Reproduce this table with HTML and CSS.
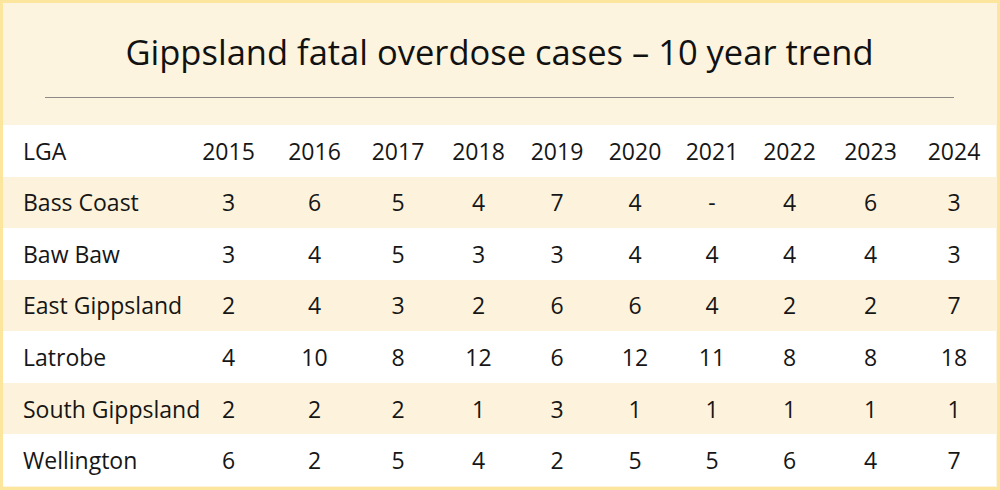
FILE: index.html
```html
<!DOCTYPE html>
<html lang="en">
<head>
<meta charset="utf-8">
<title>Gippsland fatal overdose cases – 10 year trend</title>
<link rel="stylesheet" href="styles.css">
</head>
<body>
<div class="card">
  <h1 class="title">Gippsland fatal overdose cases – 10 year trend</h1>
  <hr class="rule">
  <table class="data">
    <colgroup>
      <col class="c-lga">
      <col class="c15"><col class="c16"><col class="c17"><col class="c18"><col class="c19">
      <col class="c20"><col class="c21"><col class="c22"><col class="c23"><col class="c24">
    </colgroup>
    <thead>
      <tr class="row-white">
        <th class="lga">LGA</th>
        <th>2015</th><th>2016</th><th>2017</th><th>2018</th><th>2019</th>
        <th>2020</th><th>2021</th><th>2022</th><th>2023</th><th>2024</th>
      </tr>
    </thead>
    <tbody>
      <tr class="row-cream">
        <td class="lga">Bass Coast</td>
        <td>3</td><td>6</td><td>5</td><td>4</td><td>7</td><td>4</td><td>-</td><td>4</td><td>6</td><td>3</td>
      </tr>
      <tr class="row-white">
        <td class="lga">Baw Baw</td>
        <td>3</td><td>4</td><td>5</td><td>3</td><td>3</td><td>4</td><td>4</td><td>4</td><td>4</td><td>3</td>
      </tr>
      <tr class="row-cream">
        <td class="lga">East Gippsland</td>
        <td>2</td><td>4</td><td>3</td><td>2</td><td>6</td><td>6</td><td>4</td><td>2</td><td>2</td><td>7</td>
      </tr>
      <tr class="row-white">
        <td class="lga">Latrobe</td>
        <td>4</td><td>10</td><td>8</td><td>12</td><td>6</td><td>12</td><td>11</td><td>8</td><td>8</td><td>18</td>
      </tr>
      <tr class="row-cream">
        <td class="lga">South Gippsland</td>
        <td>2</td><td>2</td><td>2</td><td>1</td><td>3</td><td>1</td><td>1</td><td>1</td><td>1</td><td>1</td>
      </tr>
      <tr class="row-white">
        <td class="lga">Wellington</td>
        <td>6</td><td>2</td><td>5</td><td>4</td><td>2</td><td>5</td><td>5</td><td>6</td><td>4</td><td>7</td>
      </tr>
    </tbody>
  </table>
</div>
</body>
</html>
```

FILE: styles.css
```css
html, body {
  margin: 0;
  padding: 0;
}

body {
  width: 1000px;
  height: 490px;
  font-family: "Open Sans", "Noto Sans", sans-serif;
  color: #161616;
  background: #fce59c;
}

.card {
  box-sizing: border-box;
  width: 1000px;
  height: 490px;
  background: #fdf4df;
  border-style: solid;
  border-color: #fce59c;
  border-width: 3px;
  padding: 0 1px 1px 0;
  display: flex;
  flex-direction: column;
}

.title {
  margin: 27px 0 0 0;
  font-size: 34.5px;
  line-height: 44px;
  font-weight: 400;
  text-align: center;
  color: #111;
}

.rule {
  margin: 23px 42px 0 42px;
  border: 0;
  height: 1px;
  background: #8c8a84;
}

.data {
  margin-top: 27px;
  width: 993px;
  table-layout: fixed;
  border-collapse: collapse;
  border-spacing: 0;
  font-size: 23px;
}

.data tr {
  height: 51.57px;
}

.data th,
.data td {
  padding: 0;
  text-align: center;
  vertical-align: middle;
  font-weight: 400;
  line-height: 30px;
}

.data .lga {
  text-align: left;
  padding-left: 20px;
  white-space: nowrap;
}

.row-white { background: #ffffff; }
.row-cream { background: #fdf3dc; }

.c-lga { width: 182px; }
.c15 { width: 87px; }
.c16 { width: 85px; }
.c17 { width: 82px; }
.c18 { width: 79px; }
.c19 { width: 78px; }
.c20 { width: 78px; }
.c21 { width: 76px; }
.c22 { width: 79px; }
.c23 { width: 83px; }
.c24 { width: 84px; }
```
